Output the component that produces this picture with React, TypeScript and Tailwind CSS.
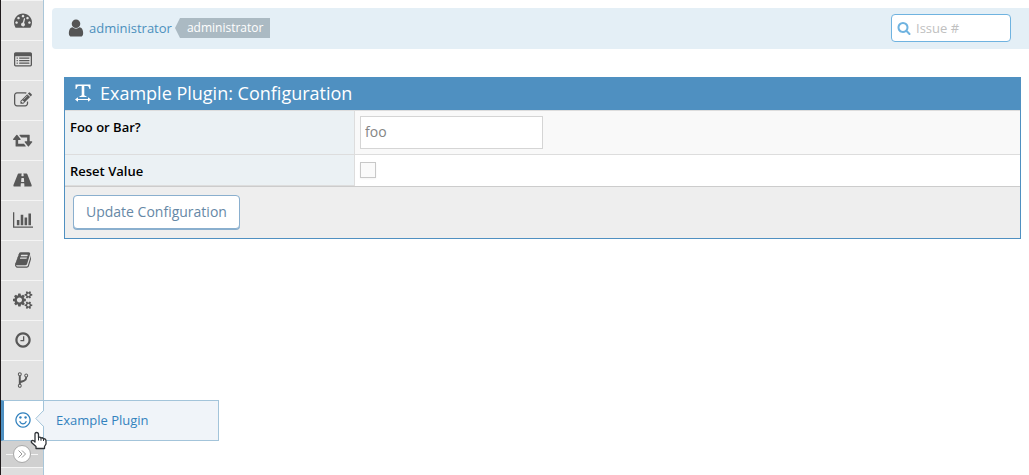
import React from "react";

type Glyph = { width: number; path: string };

const glyphs: Record<string, Glyph> = {
  dashboard: {
    width: 1792,
    path: "M384 1152q0-53-37.5-90.5t-90.5-37.5-90.5 37.5-37.5 90.5 37.5 90.5 90.5 37.5 90.5-37.5 37.5-90.5zm192-448q0-53-37.5-90.5t-90.5-37.5-90.5 37.5-37.5 90.5 37.5 90.5 90.5 37.5 90.5-37.5 37.5-90.5zm428 481l101-382q6-26-7.5-48.5t-38.5-29.5-48 6.5-30 39.5l-101 382q-60 5-107 43.5t-63 98.5q-20 77 20 146t117 89 146-20 89-117q16-60-6-117t-72-91zm660-33q0-53-37.5-90.5t-90.5-37.5-90.5 37.5-37.5 90.5 37.5 90.5 90.5 37.5 90.5-37.5 37.5-90.5zm-640-640q0-53-37.5-90.5t-90.5-37.5-90.5 37.5-37.5 90.5 37.5 90.5 90.5 37.5 90.5-37.5 37.5-90.5zm448 192q0-53-37.5-90.5t-90.5-37.5-90.5 37.5-37.5 90.5 37.5 90.5 90.5 37.5 90.5-37.5 37.5-90.5zm320 448q0 261-141 483-19 29-54 29h-1402q-35 0-54-29-141-221-141-483 0-182 71-348t191-286 286-191 348-71 348 71 286 191 191 286 71 348z",
  },
  list: {
    width: 1792,
    path: "M384 1184v64q0 13-9.5 22.5t-22.5 9.5h-64q-13 0-22.5-9.5t-9.5-22.5v-64q0-13 9.5-22.5t22.5-9.5h64q13 0 22.5 9.5t9.5 22.5zm0-256v64q0 13-9.5 22.5t-22.5 9.5h-64q-13 0-22.5-9.5t-9.5-22.5v-64q0-13 9.5-22.5t22.5-9.5h64q13 0 22.5 9.5t9.5 22.5zm0-256v64q0 13-9.5 22.5t-22.5 9.5h-64q-13 0-22.5-9.5t-9.5-22.5v-64q0-13 9.5-22.5t22.5-9.5h64q13 0 22.5 9.5t9.5 22.5zm1152 512v64q0 13-9.5 22.5t-22.5 9.5h-960q-13 0-22.5-9.5t-9.5-22.5v-64q0-13 9.5-22.5t22.5-9.5h960q13 0 22.5 9.5t9.5 22.5zm0-256v64q0 13-9.5 22.5t-22.5 9.5h-960q-13 0-22.5-9.5t-9.5-22.5v-64q0-13 9.5-22.5t22.5-9.5h960q13 0 22.5 9.5t9.5 22.5zm0-256v64q0 13-9.5 22.5t-22.5 9.5h-960q-13 0-22.5-9.5t-9.5-22.5v-64q0-13 9.5-22.5t22.5-9.5h960q13 0 22.5 9.5t9.5 22.5zm128 704v-832q0-13-9.5-22.5t-22.5-9.5h-1472q-13 0-22.5 9.5t-9.5 22.5v832q0 13 9.5 22.5t22.5 9.5h1472q13 0 22.5-9.5t9.5-22.5zm128-1088v1088q0 66-47 113t-113 47h-1472q-66 0-113-47t-47-113v-1088q0-66 47-113t113-47h1472q66 0 113 47t47 113z",
  },
  edit: {
    width: 1792,
    path: "M888 1184l116-116-152-152-116 116v56h96v96h56zm440-720q-16-16-33 1l-350 350q-17 17-1 33t33-1l350-350q17-17 1-33zm80 594v190q0 119-84.5 203.5t-203.5 84.5h-832q-119 0-203.5-84.5t-84.5-203.5v-832q0-119 84.5-203.5t203.5-84.5h832q63 0 117 25 15 7 18 23 3 17-9 29l-49 49q-14 14-32 8-23-6-45-6h-832q-66 0-113 47t-47 113v832q0 66 47 113t113 47h832q66 0 113-47t47-113v-126q0-13 9-22l64-64q15-15 35-7t20 29zm-96-738l288 288-672 672h-288v-288zm444 132l-92 92-288-288 92-92q28-28 68-28t68 28l152 152q28 28 28 68t-28 68z",
  },
  retweet: {
    width: 1920,
    path: "M1280 1504q0 13-9.5 22.5t-22.5 9.5h-960q-8 0-13.5-2t-9-7-5.5-8-3-11.5-1-11.5v-600h-192q-26 0-45-19t-19-45q0-24 15-41l320-384q19-22 49-22t49 22l320 384q15 17 15 41 0 26-19 45t-45 19h-192v384h576q16 0 25 11l160 192q7 10 7 21zm640-416q0 24-15 41l-320 384q-20 23-49 23t-49-23l-320-384q-15-17-15-41 0-26 19-45t45-19h192v-384h-576q-16 0-25-12l-160-192q-7-9-7-20 0-13 9.5-22.5t22.5-9.5h960q8 0 13.5 2t9 7 5.5 8 3 11.5 1 11.5v600h192q26 0 45 19t19 45z",
  },
  road: {
    width: 1920,
    path: "M1111 1064v-4l-24-320q-1-13-11-22.5t-23-9.5h-186q-13 0-23 9.5t-11 22.5l-24 320v4q-1 12 8 20t21 8h244q12 0 21-8t8-20zm749 399q0 73-46 73h-704q13 0 22-9.5t8-22.5l-20-256q-1-13-11-22.5t-23-9.5h-272q-13 0-23 9.5t-11 22.5l-20 256q-1 13 8 22.5t22 9.5h-704q-46 0-46-73 0-54 26-116l417-1044q8-19 26-33t38-14h339q-13 0-23 9.5t-11 22.5l-15 192q-1 14 8 23t22 9h166q13 0 22-9t8-23l-15-192q-1-13-11-22.5t-23-9.5h339q20 0 38 14t26 33l417 1044q26 62 26 116z",
  },
  chart: {
    width: 2048,
    path: "M640 896v512h-256v-512h256zm384-512v1024h-256v-1024h256zm1024 1152v128h-2048v-1536h128v1408h1920zm-640-896v768h-256v-768h256zm384-384v1152h-256v-1152h256z",
  },
  book: {
    width: 1664,
    path: "M1639 478q40 57 18 129l-275 906q-19 64-76.5 107.5t-122.5 43.5h-923q-77 0-148.5-53.5t-99.5-131.5q-24-67-2-127 0-4 3-27t4-37q1-8-3-21.5t-3-19.5q2-11 8-21t16.5-23.5 16.5-23.5q23-38 45-91.5t30-91.5q3-10 .5-30t-.5-28q3-11 17-28t17-23q21-36 42-92t25-90q1-9-2.5-32t.5-28q4-13 22-30.5t22-22.5q19-26 42.5-84.5t27.5-96.5q1-8-3-25.5t-2-26.5q2-8 9-18t18-23 17-21q8-12 16.5-30.5t15-35 16-36 19.5-32 26.5-23.5 36-11.5 47.5 5.5l-1 3q38-9 51-9h761q74 0 114 56t18 130l-274 906q-36 119-71.5 153.5t-128.5 34.5h-869q-27 0-38 15-11 16-1 43 24 70 144 70h923q29 0 56-15.5t35-41.5l300-987q7-22 5-57 38 15 59 43zm-1064 2q-4 13 2 22.5t20 9.5h608q13 0 25.5-9.5t16.5-22.5l21-64q4-13-2-22.5t-20-9.5h-608q-13 0-25.5 9.5t-16.5 22.5zm-83 256q-4 13 2 22.5t20 9.5h608q13 0 25.5-9.5t16.5-22.5l21-64q4-13-2-22.5t-20-9.5h-608q-13 0-25.5 9.5t-16.5 22.5z",
  },
  cogs: {
    width: 1920,
    path: "M896 896q0-106-75-181t-181-75-181 75-75 181 75 181 181 75 181-75 75-181zm768 512q0-52-38-90t-90-38-90 38-38 90q0 53 37.5 90.5t90.5 37.5 90.5-37.5 37.5-90.5zm0-1024q0-52-38-90t-90-38-90 38-38 90q0 53 37.5 90.5t90.5 37.5 90.5-37.5 37.5-90.5zm-384 421v185q0 10-7 19.5t-16 10.5l-155 24q-11 35-32 76 34 48 90 115 7 11 7 20 0 12-7 19-23 30-82.5 89.5t-78.5 59.5q-11 0-21-7l-115-90q-37 19-77 31-11 108-23 155-7 24-30 24h-186q-11 0-20-7.5t-10-17.5l-23-153q-34-10-75-31l-118 89q-7 7-20 7-11 0-21-8-144-133-144-160 0-9 7-19 10-14 41-53t47-61q-23-44-35-82l-152-24q-10-1-17-9.5t-7-19.5v-185q0-10 7-19.5t16-10.5l155-24q11-35 32-76-34-48-90-115-7-11-7-20 0-12 7-20 22-30 82-89t79-59q11 0 21 7l115 90q34-18 77-32 11-108 23-154 7-24 30-24h186q11 0 20 7.5t10 17.5l23 153q34 10 75 31l118-89q8-7 20-7 11 0 21 8 144 133 144 160 0 8-7 19-12 16-42 54t-45 60q23 48 34 82l152 23q10 2 17 10.5t7 19.5zm640 533v140q0 16-149 31-12 27-30 52 51 113 51 138 0 4-4 7-122 71-124 71-8 0-46-47t-52-68q-20 2-30 2t-30-2q-14 21-52 68t-46 47q-2 0-124-71-4-3-4-7 0-25 51-138-18-25-30-52-149-15-149-31v-140q0-16 149-31 13-29 30-52-51-113-51-138 0-4 4-7 4-2 35-20t59-34 30-16q8 0 46 46.5t52 67.5q20-2 30-2t30 2q51-71 92-112l6-2q4 0 124 70 4 3 4 7 0 25-51 138 17 23 30 52 149 15 149 31zm0-1024v140q0 16-149 31-12 27-30 52 51 113 51 138 0 4-4 7-122 71-124 71-8 0-46-47t-52-68q-20 2-30 2t-30-2q-14 21-52 68t-46 47q-2 0-124-71-4-3-4-7 0-25 51-138-18-25-30-52-149-15-149-31v-140q0-16 149-31 13-29 30-52-51-113-51-138 0-4 4-7 4-2 35-20t59-34 30-16q8 0 46 46.5t52 67.5q20-2 30-2t30 2q51-71 92-112l6-2q4 0 124 70 4 3 4 7 0 25-51 138 17 23 30 52 149 15 149 31z",
  },
  clock: {
    width: 1792,
    path: "M1024 544v448q0 14-9 23t-23 9h-320q-14 0-23-9t-9-23v-64q0-14 9-23t23-9h224v-352q0-14 9-23t23-9h64q14 0 23 9t9 23zm416 352q0-148-73-273t-198-198-273-73-273 73-198 198-73 273 73 273 198 198 273 73 273-73 198-198 73-273zm224 0q0 209-103 385.5t-279.5 279.5-385.5 103-385.5-103-279.5-279.5-103-385.5 103-385.5 279.5-279.5 385.5-103 385.5 103 279.5 279.5 103 385.5z",
  },
  fork: {
    width: 1792,
    path: "M672 1472q0-40-28-68t-68-28-68 28-28 68 28 68 68 28 68-28 28-68zm0-1152q0-40-28-68t-68-28-68 28-28 68 28 68 68 28 68-28 28-68zm640 128q0-40-28-68t-68-28-68 28-28 68 28 68 68 28 68-28 28-68zm96 0q0 52-26 96.5t-70 69.5q-2 287-226 414-67 38-203 81-128 40-169.5 71t-41.5 100v26q44 25 70 69.5t26 96.5q0 80-56 136t-136 56-136-56-56-136q0-52 26-96.5t70-69.5v-820q-44-25-70-69.5t-26-96.5q0-80 56-136t136-56 136 56 56 136q0 52-26 96.5t-70 69.5v497q54-26 154-57 55-17 87.5-29.5t70.5-31 59-39.5 40.5-51 28-69.5 8.5-91.5q-44-25-70-69.5t-26-96.5q0-80 56-136t136-56 136 56 56 136z",
  },
  smile: {
    width: 1792,
    path: "M1262 1075q-37 121-138 195t-228 74-228-74-138-195q-8-25 4-48.5t38-31.5q25-8 48.5 4t31.5 38q25 80 92.5 129.5t151.5 49.5 151.5-49.5 92.5-129.5q8-26 32-38t49-4 37 31.5 4 48.5zm-494-435q0 53-37.5 90.5t-90.5 37.5-90.5-37.5-37.5-90.5 37.5-90.5 90.5-37.5 90.5 37.5 37.5 90.5zm512 0q0 53-37.5 90.5t-90.5 37.5-90.5-37.5-37.5-90.5 37.5-90.5 90.5-37.5 90.5 37.5 37.5 90.5zm256 256q0-130-51-248.5t-136.5-204-204-136.5-248.5-51-248.5 51-204 136.5-136.5 204-51 248.5 51 248.5 136.5 204 204 136.5 248.5 51 248.5-51 204-136.5 136.5-204 51-248.5zm128 0q0 209-103 385.5t-279.5 279.5-385.5 103-385.5-103-279.5-279.5-103-385.5 103-385.5 279.5-279.5 385.5-103 385.5 103 279.5 279.5 103 385.5z",
  },
  search: {
    width: 1792,
    path: "M1216 832q0-185-131.5-316.5t-316.5-131.5-316.5 131.5-131.5 316.5 131.5 316.5 316.5 131.5 316.5-131.5 131.5-316.5zm512 832q0 52-38 90t-90 38q-54 0-90-38l-343-342q-179 124-399 124-143 0-273.5-55.5t-225-150-150-225-55.5-273.5 55.5-273.5 150-225 225-150 273.5-55.5 273.5 55.5 225 150 150 225 55.5 273.5q0 220-124 399l343 343q37 37 37 90z",
  },
  user: {
    width: 1792,
    path: "M1536 1399q0 109-62.5 187t-150.5 78h-854q-88 0-150.5-78t-62.5-187q0-85 8.5-160.5t31.5-152 58.5-131 94-89 134.5-34.5q131 128 313 128t313-128q76 0 134.5 34.5t94 89 58.5 131 31.5 152 8.5 160.5zm-256-887q0 159-112.5 271.5t-271.5 112.5-271.5-112.5-112.5-271.5 112.5-271.5 271.5-112.5 271.5 112.5 112.5 271.5z",
  },
};

const Icon = ({ name, className }: { name: string; className: string }) => (
  <svg
    viewBox={`0 0 ${glyphs[name].width} 1792`}
    className={`w-auto shrink-0 ${className}`}
    fill="currentColor"
    aria-hidden="true"
  >
    <path d={glyphs[name].path} />
  </svg>
);

const menuItems = [
  { label: "My View", icon: "dashboard" },
  { label: "View Issues", icon: "list" },
  { label: "Report Issue", icon: "edit" },
  { label: "Change Log", icon: "retweet" },
  { label: "Roadmap", icon: "road" },
  { label: "Summary", icon: "chart" },
  { label: "Docs", icon: "book" },
  { label: "Manage", icon: "cogs" },
  { label: "Time Tracking", icon: "clock" },
  { label: "Repositories", icon: "fork" },
];

const Sidebar: React.FC = () => (
  <nav className="flex w-11 shrink-0 flex-col border-l border-r border-l-[#1f1a1c] border-r-[#a9c6d9] bg-[#dedede]">
    {menuItems.map((item) => (
      <a
        key={item.label}
        href="#"
        aria-label={item.label}
        className="flex h-10 items-center justify-center border-t border-[#f4f4f4] bg-[#e3e3e3] pb-px pl-0.5 text-[#585858]"
      >
        <Icon name={item.icon} className="h-[18px]" />
      </a>
    ))}

    <div className="relative">
      <a
        href="#"
        aria-label="Example Plugin"
        className="flex h-[41px] items-center justify-center border-y border-l-3 border-y-[#a3c4da] border-l-[#4f90c1] bg-white pr-px pb-px text-[#3382be]"
      >
        <Icon name="smile" className="h-[18px]" />
      </a>
      <a
        href="#"
        className="absolute top-0 left-full flex h-[41px] w-44 items-center border border-[#a3c4da] bg-[#f0f4f9] pl-3 text-[13px] text-[#3382be]"
      >
        Example Plugin
      </a>
      {/* pointer that joins the fly-out to its menu item */}
      <svg viewBox="0 0 9 18" className="absolute top-[10px] right-[-1px] h-[18px] w-[9px]" aria-hidden="true">
        <path d="M9 0.5L0.8 8.5L9 16.5z" fill="#f0f4f9" />
        <path d="M8.5 0.5L0.8 8.5L8.5 16.5" fill="none" stroke="#a3c4da" />
      </svg>
      <svg viewBox="0 0 17 19" className="absolute top-[31px] left-[29px] h-[19px] w-[17px]" aria-hidden="true">
        <path
          d="M6.5 1.5Q8.5 1.5 8.5 3.5V6.5Q10 5.5 11 7Q12.5 6.2 13.5 7.8Q16 7.5 16 10V13L14.5 15.5V17.5H6V15.5L1.5 11.5Q0.8 9.8 2.5 9.4Q3.5 9.4 5 11V3Q5 1.5 6.5 1.5Z"
          fill="#fff"
          stroke="#2f3337"
          strokeWidth="1.3"
          strokeLinejoin="round"
        />
        <path d="M8.5 6.5V9.5M11 7V9.8M13.5 8V10" stroke="#2f3337" fill="none" />
      </svg>
    </div>

    <div className="flex h-[27px] items-center border-b border-[#f4f4f4] bg-[#d0d0d0] px-[5px]">
      <span className="h-px flex-1 bg-[#f4f4f4]" />
      <button
        type="button"
        aria-label="Collapse menu"
        className="flex size-[18px] items-center justify-center rounded-full border border-[#a8a8a8] bg-white text-[#999]"
      >
        <svg viewBox="0 0 10 10" className="size-[10px]" fill="none" stroke="currentColor" aria-hidden="true">
          <path d="M1.5 1.5L5 5L1.5 8.5M5 1.5L8.5 5L5 8.5" />
        </svg>
      </button>
      <span className="h-px flex-1 bg-[#f4f4f4]" />
    </div>
  </nav>
);

const Breadcrumbs: React.FC = () => (
  <header className="ml-2 flex h-[41px] items-center justify-between rounded-l bg-[#e4eff6] pr-[18px] pb-px pl-[14px]">
    <div className="flex items-center text-[13px] leading-5">
      <Icon name="user" className="mr-[3px] h-5 text-[#555]" />
      <a href="#" className="text-[#4c8fbd]">
        administrator
      </a>
      <span className="ml-[3px] flex h-5 text-xs leading-5 text-white">
        <svg viewBox="0 0 5 20" className="h-5 w-[5px]" fill="#abbac3" aria-hidden="true">
          <path d="M5 0L0 10L5 20z" />
        </svg>
        <span className="bg-[#abbac3] px-[7px]">administrator</span>
      </span>
    </div>
    <form className="flex h-7 w-30 items-center rounded border border-[#6fb3e0] bg-white pl-[5px]">
      <Icon name="search" className="h-[14px] text-[#6fb3e0]" />
      <input
        type="text"
        aria-label="Issue #"
        placeholder="Issue #"
        className="w-full min-w-0 bg-transparent pt-px pl-[5px] text-[13px] text-[#696969] outline-none placeholder:text-[#c0c0c0]"
      />
    </form>
  </header>
);

const ConfigForm: React.FC = () => (
  <form className="mt-7 mr-2 ml-5 border border-[#4f90c1]">
    <h4 className="flex h-8 items-center bg-[#4f90c1] pb-0.5 pl-[10px] text-lg text-white">
      <svg viewBox="0 0 16 18" className="mr-[9px] h-[18px] w-4" fill="currentColor" aria-hidden="true">
        <path d="M0.5 0.5H15.5V5H14.5Q14 2 12.5 2H9.3V11Q9.3 12 11.5 12.2V13H4.5V12.2Q6.7 12 6.7 11V2H3.5Q2 2 1.5 5H0.5Z" />
        <path d="M0 15.5L3 13.2V14.9H13V13.2L16 15.5L13 17.8V16.1H3V17.8Z" />
      </svg>
      Example Plugin: Configuration
    </h4>
    <table className="w-full border-separate border-spacing-0 text-[13px] text-black">
      <tbody>
        <tr className="bg-[#f9f9f9]">
          <th
            scope="row"
            className="w-[290px] border-t border-r border-[#ddd] bg-[#ebf1f4] px-[5px] pt-1.5 text-left align-top leading-5 font-semibold"
          >
            <label htmlFor="foo-or-bar">Foo or Bar?</label>
          </th>
          <td className="h-11 border-t border-[#ddd] px-[5px]">
            <input
              id="foo-or-bar"
              type="text"
              defaultValue="foo"
              className="block h-[33px] w-[183px] border border-[#d5d5d5] bg-white px-1 pb-0.5 text-sm text-[#858585] outline-none"
            />
          </td>
        </tr>
        <tr className="bg-white">
          <th
            scope="row"
            className="border-t border-r border-b border-[#ddd] bg-[#ebf1f4] px-[5px] pt-0.5 text-left align-middle leading-5 font-semibold"
          >
            <label htmlFor="reset-value">Reset Value</label>
          </th>
          <td className="h-8 border-t border-[#ddd] px-[5px] pb-0.5">
            <input
              id="reset-value"
              type="checkbox"
              className="block size-4 appearance-none border border-[#c8c8c8] bg-[#fafafa] shadow-xs"
            />
          </td>
        </tr>
      </tbody>
    </table>
    <div className="border-t border-[#ccc] bg-[#eee] px-2 pt-2 pb-[9px]">
      <button
        type="submit"
        className="block h-[34px] rounded border border-[#8aafce] bg-white px-3 text-sm text-[#6688a6] shadow-[0_1px_0_#8aafce]"
      >
        Update Configuration
      </button>
    </div>
  </form>
);

const App: React.FC = () => {
  return (
    <div className="flex min-h-screen bg-white font-['Open_Sans',sans-serif]">
      <Sidebar />
      <main className="min-w-0 flex-1 pt-2">
        <Breadcrumbs />
        <ConfigForm />
      </main>
    </div>
  );
};

export default App;
